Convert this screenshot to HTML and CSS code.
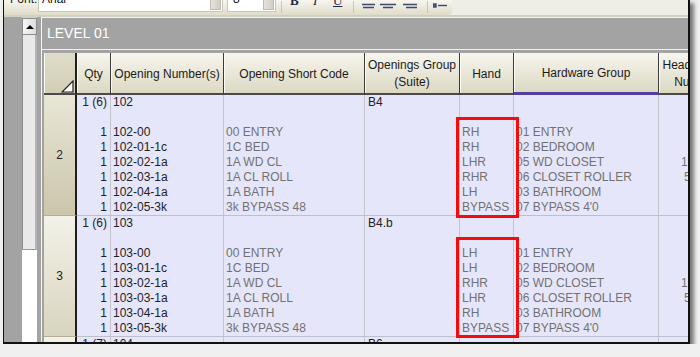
FILE: index.html
```html
<!DOCTYPE html>
<html lang="en">
<head>
  <meta charset="UTF-8" />
  <title>Openings - Level 01</title>
  <link rel="stylesheet" href="styles.css">
</head>
<body>
  <div class="window">
    <div class="toolbar">
      <div class="tools">
        <span class="tb-label">Font:</span>
        <div class="combo combo-name"><span class="combo-text">Arial</span><span class="combo-btn"></span></div>
        <div class="combo combo-size"><span class="combo-text">8</span><span class="combo-btn"></span></div>
        <span class="tb-sep"></span>
        <span class="tb-fmt fmt-b">B</span>
        <span class="tb-fmt fmt-i">I</span>
        <span class="tb-fmt fmt-u">U</span>
        <span class="tb-sep sep-fmt"></span>
        <svg class="tb-icon ic-1" width="14" height="10" viewBox="0 0 14 10"><path d="M0 4.5h13M1 7.5h11" /></svg>
        <svg class="tb-icon ic-2" width="16" height="10" viewBox="0 0 16 10"><path d="M0 4.5h16M3 7.5h10" /></svg>
        <svg class="tb-icon ic-3" width="14" height="10" viewBox="0 0 14 10"><path d="M0 4.5h14M3 7.5h11" /></svg>
        <span class="tb-sep sep-list"></span>
        <svg class="tb-icon ic-list" width="14" height="10" viewBox="0 0 14 10"><rect x="0" y="4" width="3" height="3" fill="#3f5fb0" /><path d="M5 5.5h9" /></svg>
      </div>
    </div>

    <div class="workspace">
      <div class="gutter"></div>
      <div class="scrollbar">
        <div class="sb-up"></div>
        <div class="sb-thumb"></div>
      </div>
      <div class="sb-edge"></div>

      <div class="main">
        <div class="level">LEVEL 01</div>
        <div class="grid-wrap">
          <table class="grid">
            <colgroup>
              <col class="w-rowhead"><col class="w-qty"><col class="w-num"><col class="w-code">
              <col class="w-suite"><col class="w-hand"><col class="w-hw"><col class="w-head">
            </colgroup>
            <thead>
              <tr>
                <th class="corner">
                  <svg class="corner-mark" width="13" height="13" viewBox="0 0 13 13"><path d="M12 1V12H1Z" fill="#fff" stroke="#1e1e1e" stroke-width="1.2" /></svg>
                </th>
                <th>Qty</th>
                <th>Opening Number(s)</th>
                <th>Opening Short Code</th>
                <th>Openings Group (Suite)</th>
                <th>Hand</th>
                <th class="sorted">Hardware Group</th>
                <th>Heading Set Number</th>
              </tr>
            </thead>
            <tbody>
              <tr>
                <th class="rowhead rowhead-sel">2</th>
                <td class="c-qty">1 (6)<br><br>1<br>1<br>1<br>1<br>1<br>1</td>
                <td class="c-num">102<br><br>102-00<br>102-01-1c<br>102-02-1a<br>102-03-1a<br>102-04-1a<br>102-05-3k</td>
                <td class="c-code"><br><br>00 ENTRY<br>1C BED<br>1A WD CL<br>1A CL ROLL<br>1A BATH<br>3k BYPASS 48</td>
                <td class="c-suite">B4</td>
                <td class="c-hand"><br><br>RH<br>RH<br>LHR<br>RHR<br>LH<br>BYPASS</td>
                <td class="c-hw"><br><br>01 ENTRY<br>02 BEDROOM<br>05 WD CLOSET<br>06 CLOSET ROLLER<br>03 BATHROOM<br>07 BYPASS 4'0</td>
                <td class="c-head"><br><br><br><br>10<br><span class="nudge">5</span></td>
              </tr>
              <tr>
                <th class="rowhead">3</th>
                <td class="c-qty">1 (6)<br><br>1<br>1<br>1<br>1<br>1<br>1</td>
                <td class="c-num">103<br><br>103-00<br>103-01-1c<br>103-02-1a<br>103-03-1a<br>103-04-1a<br>103-05-3k</td>
                <td class="c-code"><br><br>00 ENTRY<br>1C BED<br>1A WD CL<br>1A CL ROLL<br>1A BATH<br>3k BYPASS 48</td>
                <td class="c-suite">B4.b</td>
                <td class="c-hand"><br><br>LH<br>LH<br>RHR<br>LHR<br>RH<br>BYPASS</td>
                <td class="c-hw"><br><br>01 ENTRY<br>02 BEDROOM<br>05 WD CLOSET<br>06 CLOSET ROLLER<br>03 BATHROOM<br>07 BYPASS 4'0</td>
                <td class="c-head"><br><br><br><br>10<br><span class="nudge">5</span></td>
              </tr>
              <tr>
                <th class="rowhead">4</th>
                <td class="c-qty">1 (7)<br><br>1<br>1</td>
                <td class="c-num">104<br><br>104-00<br>104-01-1c</td>
                <td class="c-code"><br><br>00 ENTRY<br>1C BED</td>
                <td class="c-suite">B6</td>
                <td class="c-hand"><br><br>RH<br>LH</td>
                <td class="c-hw"><br><br>01 ENTRY<br>02 BEDROOM</td>
                <td class="c-head"></td>
              </tr>
            </tbody>
          </table>
        </div>
      </div>
    </div>

    <!-- annotation boxes over the Hand column -->
    <div class="mark mark-1"></div>
    <div class="mark mark-2"></div>
  </div>
</body>
</html>
```

FILE: styles.css
```css
:root {
  --frame: #111;
  --panel-gray: #a3a3a3;
  --cell-bg: #e6e6fa;
  --cell-line: #c4c4cf;
  --text-dark: #222;
  --text-gray: #727272;
  --head-top: #f7f6ee;
  --head-bottom: #dcd8c3;
}

body {
  margin: 0;
  background: #f0f0f0;
  font-family: "Liberation Sans", Arial, sans-serif;
  font-size: 12px;
  color: var(--text-dark);
}

.window {
  position: relative;
  margin-left: 3px;
  width: 687px;
  height: 344px;
  box-sizing: border-box;
  border-left: 1px solid var(--frame);
  border-right: 2px solid var(--frame);
  border-bottom: 2px solid var(--frame);
  box-shadow: 4px 3px 4px rgba(0, 0, 0, 0.5);
  background: var(--panel-gray);
  display: flex;
  flex-direction: column;
  overflow: hidden;
}

/* toolbar */
.toolbar {
  flex: none;
  height: 15px;
  background: #efeee6;
  border-bottom: 2px solid #d2d0c5;
  display: flex;
}

.tools {
  width: 448px;
  height: 15px;
  display: flex;
  align-items: flex-end;
  background: linear-gradient(#f7f6ef, #dfdcc9);
  border-bottom-right-radius: 4px;
  overflow: hidden;
}

.tb-label {
  width: 28px;
  margin-left: 6px;
  margin-bottom: 9px;
  line-height: 14px;
  color: #222;
}

.combo {
  height: 22px;
  margin-bottom: 3px;
  box-sizing: border-box;
  background: #fff;
  border: 1px solid #c9c7bd;
  border-top: none;
  display: flex;
  justify-content: space-between;
}

.combo-name {
  width: 185px;
}

.combo-size {
  width: 49px;
  margin-left: 4px;
}

.combo-text {
  padding: 2px 0 0 3px;
  line-height: 14px;
  color: #111;
}

.combo-size .combo-text {
  padding-left: 5px;
}

.combo-btn {
  width: 9px;
  margin: 0 1px 1px 0;
  background: linear-gradient(to right, #e4e2da, #cfcdc4);
  border: 1px solid #bdbbb2;
  border-top: none;
}

.tb-sep {
  width: 1px;
  height: 12px;
  margin-left: 5px;
  margin-bottom: 2px;
  background: #c9c6b4;
}

.tb-fmt {
  line-height: 12px;
  margin-bottom: 8px;
  font-family: "Liberation Serif", serif;
  font-size: 13px;
  color: #1f2748;
}

.fmt-b {
  margin-left: 8px;
  width: 8px;
  font-weight: bold;
}

.fmt-i {
  margin-left: 15px;
  width: 5px;
  font-style: italic;
}

.fmt-u {
  margin-left: 15px;
  width: 9px;
  text-decoration: underline;
}

.sep-fmt {
  margin-left: 11px;
}

.tb-icon {
  margin-bottom: 5px;
  fill: none;
  stroke: #3d4a72;
  stroke-width: 1.4;
}

.ic-1 { margin-left: 8px; }
.ic-2 { margin-left: 4px; }
.ic-3 { margin-left: 7px; }
.sep-list { margin-left: 10px; }
.ic-list { margin-left: 5px; }

/* left strip and scroll bar */
.workspace {
  flex: 1;
  min-height: 0;
  display: flex;
}

.gutter {
  width: 18px;
  flex: none;
  background: var(--panel-gray);
}

.scrollbar {
  width: 15px;
  flex: none;
  background: #fff;
  border-top: 1px solid #d0d0d0;
  box-sizing: border-box;
  display: flex;
  flex-direction: column;
}

.sb-up {
  height: 17px;
  box-sizing: border-box;
  background: linear-gradient(to right, #f6f6f6, #dedede);
  border: 1px solid #8c8c8c;
  display: flex;
  align-items: center;
  justify-content: center;
}

.sb-up::before {
  content: "";
  border-left: 4px solid transparent;
  border-right: 4px solid transparent;
  border-bottom: 4px solid #000;
}

.sb-thumb {
  height: 215px;
  box-sizing: border-box;
  background: #e9e9e9;
  border-left: 1px solid #8c8c8c;
  border-right: 2px solid #b4b4b4;
  border-bottom: 1px solid #9a9a9a;
}

.sb-edge {
  width: 4px;
  flex: none;
  background: var(--panel-gray);
}

/* level panel */
.main {
  flex: 1;
  min-width: 0;
  border-left: 1px solid #f4f4f4;
  border-top: 1px solid #f4f4f4;
  background: var(--panel-gray);
  display: flex;
  flex-direction: column;
  overflow: hidden;
}

.level {
  flex: none;
  height: 31px;
  line-height: 31px;
  padding-left: 5px;
  border-bottom: 1px solid #f2f2f2;
  color: #fff;
  font-size: 14px;
}

.grid-wrap {
  padding: 3px 0 0 2px;
}

/* grid */
.grid {
  border-collapse: separate;
  border-spacing: 0;
  table-layout: fixed;
  width: 689px;
  font-size: 12px;
}

.w-rowhead { width: 33px; }
.w-qty { width: 34px; }
.w-num { width: 113px; }
.w-code { width: 141px; }
.w-suite { width: 95px; }
.w-hand { width: 54px; }
.w-hw { width: 145px; }
.w-head { width: 74px; }

.grid th,
.grid td {
  padding: 0;
  overflow: hidden;
  white-space: nowrap;
}

.grid thead th {
  box-sizing: border-box;
  height: 42px;
  padding-top: 2px;
  font-weight: normal;
  line-height: 17px;
  text-align: center;
  vertical-align: middle;
  white-space: normal;
  color: #1b1b1b;
  background: linear-gradient(var(--head-top), var(--head-bottom));
  border-right: 1px solid #3a3a3a;
  border-bottom: 2px solid #4a4a4a;
  box-shadow: inset 1px 0 #fbfbf6;
}

.grid thead th.sorted {
  border-bottom: 3px solid #52419a;
}

.grid thead th.corner {
  position: relative;
  background: linear-gradient(#dfdcc9, #d2ceb5);
  border-right: 2px solid #1e1e1e;
  text-align: right;
  vertical-align: bottom;
  padding: 0 1px 0 0;
}

.corner-mark {
  display: block;
  margin-left: auto;
}

.grid tbody td {
  vertical-align: top;
  line-height: 15px;
  background: var(--cell-bg);
  border-right: 1px solid var(--cell-line);
  border-bottom: 1px solid #bfbfca;
}

.rowhead {
  font-weight: normal;
  text-align: center;
  vertical-align: middle;
  color: var(--text-dark);
  background: linear-gradient(#f3f2e9, #d8d4be);
  border-right: 2px solid #1e1e1e;
  border-bottom: 1px solid #b3ae95;
}

.rowhead-sel {
  background: linear-gradient(#e8e6d6, #cbc6ab);
}

.c-qty {
  text-align: right;
  padding-right: 3px !important;
}

.c-num {
  padding-left: 2px !important;
}

.c-code,
.c-hand,
.c-hw {
  padding-left: 2px !important;
  color: var(--text-gray);
}

.c-suite {
  padding-left: 3px !important;
}

.c-head {
  padding-left: 22px !important;
  color: var(--text-gray);
}

.nudge {
  padding-left: 3px;
}

/* red highlight boxes */
.mark {
  position: absolute;
  left: 452px;
  width: 63px;
  height: 101px;
  box-sizing: border-box;
  border: 3px solid #f20c0c;
}

.mark-1 {
  top: 117px;
}

.mark-2 {
  top: 237px;
}
```
